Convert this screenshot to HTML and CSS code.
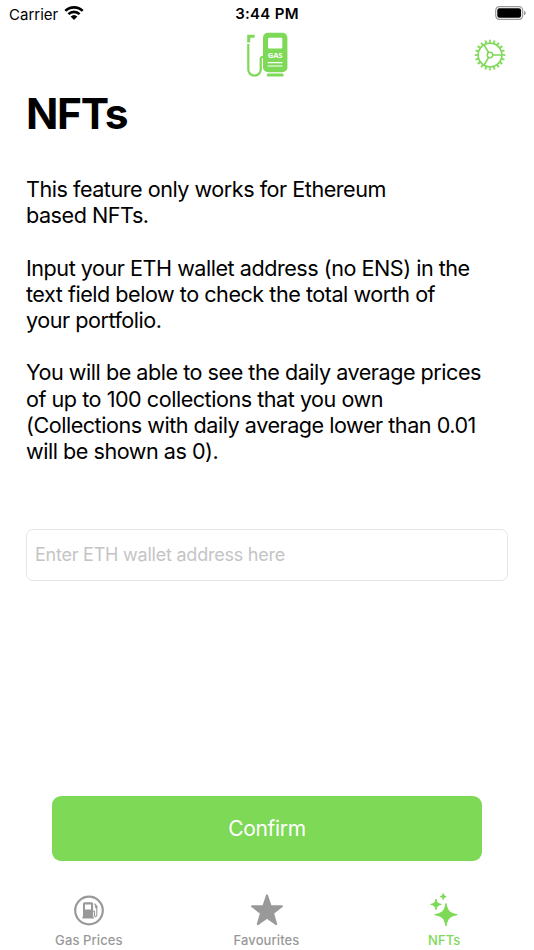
FILE: index.html
```html
<!DOCTYPE html>
<html lang="en">
<head>
    <meta charset="UTF-8">
    <title>NFTs</title>
    <link rel="stylesheet" href="styles.css">
</head>
<body>
    <div class="app">
        <div class="status-bar">
            <div class="status-carrier">
                <span>Carrier</span>
                <svg class="wifi-icon" viewBox="0 0 20 16">
                    <path d="M1.3 5.9a12.6 12.6 0 0 1 17.4 0M4.4 9.1a8.2 8.2 0 0 1 11.2 0" fill="none" stroke="#000" stroke-width="2.6"></path>
                    <path d="M6.6 11.4a5.1 5.1 0 0 1 6.8 0L10 15z"></path>
                </svg>
            </div>
            <span class="status-time">3:44 PM</span>
            <svg class="battery-icon" viewBox="0 0 32 14">
                <rect x="0.7" y="0.7" width="27" height="12.6" rx="3.7" fill="none" stroke="#999" stroke-width="1.2"></rect>
                <rect x="2.3" y="2.3" width="23.8" height="9.4" rx="2.2"></rect>
                <path d="M29 4.7q1.7.5 1.7 2.3T29 9.3z" fill="#999"></path>
            </svg>
        </div>

        <div class="nav-bar">
            <svg class="logo" viewBox="0 0 42 46">
                <path d="M1.2 3.2q0-.4.4-.4h7v3H4.2v4.8h-3z" fill="#7ed957"></path>
                <path d="M2.3 12v25.5a6.2 6.2 0 0 0 12.4 0V27.2q0-2.4 2.5-2.4h1" fill="none" stroke="#7ed957" stroke-width="2.2"></path>
                <rect x="17" y="0.7" width="24.4" height="39.6" rx="5" fill="#7ed957"></rect>
                <rect x="22" y="5.7" width="14.3" height="10.8" rx="1" fill="#fff"></rect>
                <text class="logo-text" x="29" y="26.3">GAS</text>
                <path d="M21.7 30.6h14.8M21.7 34h14.8" stroke="#fff" stroke-width="1.2"></path>
                <path d="M22.2 43.1h14" stroke="#7ed957" stroke-width="3" stroke-linecap="round"></path>
            </svg>
            <svg class="gear-icon" viewBox="0 0 32 32">
                <g fill="none" stroke="#7ed957">
                    <circle cx="16" cy="16" r="11.9" stroke-width="1.7"></circle>
                    <circle cx="16" cy="16" r="13.8" stroke-width="2.8" pathLength="90" stroke-dasharray="1.8 2.7" stroke-dashoffset="0.9"></circle>
                    <circle cx="16" cy="16" r="2.7" stroke-width="1.5"></circle>
                    <path d="M18.7 16H28M14.65 13.65L10 5.6M14.65 18.35L10 26.4" stroke-width="1.7"></path>
                </g>
            </svg>
        </div>

        <div class="content">
            <h1 class="title">NFTs</h1>
            <div class="description">
                <p>This feature only works for Ethereum<br>based NFTs.</p>
                <p>Input your ETH wallet address (no ENS) in the<br>text field below to check the total worth of<br>your portfolio.</p>
                <p>You will be able to see the daily average prices<br>of up to 100 collections that you own<br>(Collections with daily average lower than 0.01<br>will be shown as 0).</p>
            </div>
            <input class="address-input" type="text" placeholder="Enter ETH wallet address here">
            <button class="confirm-button">Confirm</button>
        </div>

        <div class="tab-bar">
            <div class="tab">
                <svg class="tab-icon" viewBox="0 0 36 36">
                    <circle cx="18" cy="17.5" r="13.8" fill="none" stroke="#999" stroke-width="2.2"></circle>
                    <path fill-rule="evenodd" d="M13.5 9.2h7q1.6 0 1.6 1.6v13h.7v1.7H11.4v-1.7h.6v-13q0-1.6 1.5-1.6zM14 11.4v5h6v-5z" fill="#999"></path>
                    <path d="M22 18.3h1.5v4q0 1.3 1.1 1.3t1.2-1.3v-9l-2.4-2.7" fill="none" stroke="#999" stroke-width="1.1"></path>
                    <path d="M23.5 12.6h2.6v3h-1.4z" fill="#999"></path>
                </svg>
                <span>Gas Prices</span>
            </div>
            <div class="tab">
                <svg class="tab-icon" viewBox="0 0 36 36">
                    <path d="M18 2.4l3.7 10.8h11.2L24 20.1l3.2 11L18 24.6l-9.2 6.5 3.2-11-8.9-6.9h11.2z" fill="#999" stroke="#999" stroke-width="2" stroke-linejoin="round"></path>
                </svg>
                <span>Favourites</span>
            </div>
            <div class="tab active">
                <svg class="tab-icon" viewBox="0 0 36 36">
                    <g fill="#7ed957" stroke="#7ed957" stroke-width="1" stroke-linejoin="round">
                        <path d="M20 10.5c1.6 7.5 3.5 9.6 11.2 11.2-7.7 1.6-9.6 3.7-11.2 11.2-1.6-7.5-3.5-9.6-11.2-11.2 7.7-1.6 9.6-3.7 11.2-11.2z"></path>
                        <path d="M10 6.1c.8 3.7 1.7 4.6 5.3 5.3-3.6.7-4.5 1.6-5.3 5.3-.8-3.7-1.7-4.6-5.3-5.3 3.6-.7 4.5-1.6 5.3-5.3z"></path>
                        <path d="M17.2.6c.5 2 1 2.5 3 3-2 .5-2.5 1-3 3-.5-2-1-2.5-3-3 2-.5 2.5-1 3-3z"></path>
                    </g>
                </svg>
                <span>NFTs</span>
            </div>
        </div>
    </div>
</body>
</html>
```
FILE: styles.css
```css
* {
    margin: 0;
    padding: 0;
    box-sizing: border-box;
}

body {
    font-family: Inter, sans-serif;
    color: #000;
    background-color: #fff;
}

.app {
    width: 534px;
    height: 950px;
    display: flex;
    flex-direction: column;
    overflow: hidden;
}

.status-bar {
    height: 28px;
    padding: 0 7px 0 9px;
    display: grid;
    grid-template-columns: 1fr auto 1fr;
    align-items: center;
    font-size: 15px;
}

.status-carrier {
    display: flex;
    align-items: center;
    gap: 6px;
}

.wifi-icon {
    width: 20px;
    height: 16px;
    margin-top: -3px;
}

.status-time {
    font-weight: 600;
    letter-spacing: 0.3px;
    margin-right: 2px;
    margin-top: -2px;
}

.battery-icon {
    width: 32px;
    height: 14px;
    justify-self: end;
    margin-top: -2px;
}

.nav-bar {
    height: 58px;
    padding: 4px 28px 0;
    display: grid;
    grid-template-columns: 1fr 42px 1fr;
}

.logo {
    width: 42px;
    height: 46px;
    grid-column: 2;
}

.logo-text {
    fill: #fff;
    font-family: "Open Sans", sans-serif;
    font-size: 7.6px;
    font-weight: 700;
    letter-spacing: -0.2px;
    text-anchor: middle;
}

.gear-icon {
    width: 32px;
    height: 32px;
    justify-self: end;
    margin-top: 7px;
}

.content {
    flex: 1;
    padding: 0 26px;
    display: flex;
    flex-direction: column;
}

.title {
    font-size: 42.5px;
    line-height: 56px;
    font-weight: 700;
    letter-spacing: -1.3px;
}

.description {
    height: 352px;
    margin-top: 34px;
    margin-bottom: 1px;
    display: flex;
    flex-direction: column;
    gap: 26.2px;
    font-size: 21.6px;
    line-height: 26.2px;
    letter-spacing: -0.48px;
    white-space: nowrap;
}

.address-input {
    height: 52px;
    flex-shrink: 0;
    padding: 0 8px 2px;
    border: 1px solid #e5e5e5;
    border-radius: 7px;
    font-family: inherit;
    font-size: 18px;
    letter-spacing: -0.23px;
}

.address-input::placeholder {
    color: #c4c4c6;
}

.confirm-button {
    height: 65px;
    flex-shrink: 0;
    margin: 215px 26px 0;
    border: none;
    border-radius: 9px;
    background-color: #7ed957;
    color: #fff;
    font-family: inherit;
    font-size: 21px;
    letter-spacing: -0.3px;
}

.tab-bar {
    height: 57px;
    display: grid;
    grid-template-columns: repeat(3, 177.7px);
}

.tab {
    display: flex;
    flex-direction: column;
    align-items: center;
    gap: 3px;
    color: #999;
    font-size: 13px;
    font-weight: 500;
    letter-spacing: 0.1px;
}

.tab-icon {
    width: 36px;
    height: 36px;
}

.tab.active {
    color: #7ed957;
}
```
